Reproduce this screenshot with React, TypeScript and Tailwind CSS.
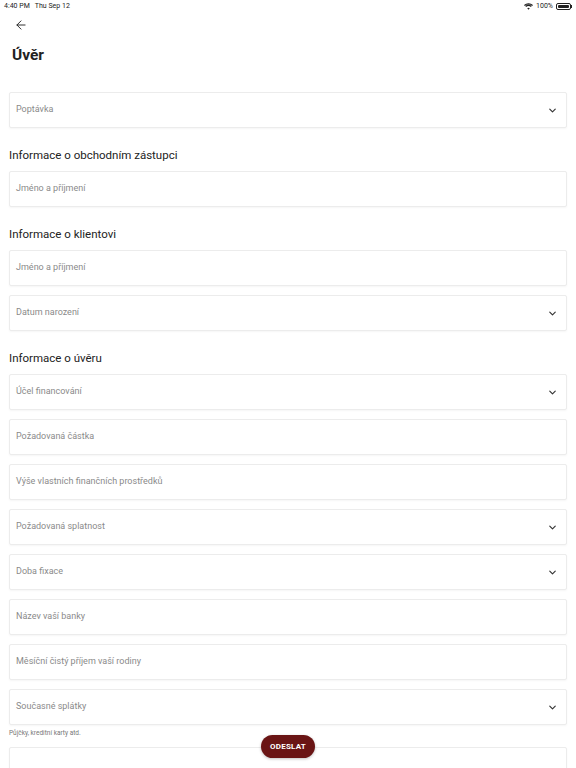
import { ChevronDown, ArrowLeft } from "lucide-react";

type Field = { label: string; select?: boolean };

function Input({ label, select }: Field) {
  return (
    <div className="h-[36px] flex items-center justify-between px-[6px] bg-white border border-[#ececec] rounded-[2px] shadow-[0_1px_2px_rgba(0,0,0,0.04)]">
      <span className="text-[9px] text-[#8a8a8a]">{label}</span>
      {select && <ChevronDown className="w-[11px] h-[11px] text-[#333] mr-[2px]" strokeWidth={2.5} />}
    </div>
  );
}

function Heading({ children }: { children: string }) {
  return <h2 className="text-[11.5px] text-[#222] mt-[20px] mb-[9px] leading-[14px]">{children}</h2>;
}

const loanFields: Field[] = [
  { label: "Účel financování", select: true },
  { label: "Požadovaná částka" },
  { label: "Výše vlastních finančních prostředků" },
  { label: "Požadovaná splatnost", select: true },
  { label: "Doba fixace", select: true },
  { label: "Název vaší banky" },
  { label: "Měsíční čistý příjem vaší rodiny" },
  { label: "Současné splátky", select: true },
];

export default function App() {
  return (
    <main className="relative h-[768px] overflow-hidden bg-white font-['Roboto',sans-serif]">
      {/* status bar */}
      <div className="flex items-center justify-between h-[11px] px-[4px] pt-[1px] text-[7px] text-[#222]">
        <span>4:40 PM&nbsp;&nbsp; Thu Sep 12</span>
        <div className="flex items-center gap-[3px]">
          <svg width="9" height="7" viewBox="0 0 18 13" fill="#222">
            <path d="M9 13l2.6-3.1a4 4 0 0 0-5.2 0z M9 5.6a7.6 7.6 0 0 1 4.8 1.7l1.6-1.9A10 10 0 0 0 9 3.2 10 10 0 0 0 2.6 5.4l1.6 1.9A7.6 7.6 0 0 1 9 5.6z M9 0a13.4 13.4 0 0 0-9 3.4l1.6 1.9A11 11 0 0 1 9 2.4a11 11 0 0 1 7.4 2.9L18 3.4A13.4 13.4 0 0 0 9 0z" />
          </svg>
          <span>100%</span>
          <div className="flex items-center">
            <div className="w-[15px] h-[7px] rounded-[2px] border border-[#222] p-[1px]">
              <div className="w-full h-full bg-[#222] rounded-[1px]" />
            </div>
            <div className="w-[1px] h-[3px] bg-[#222]" />
          </div>
        </div>
      </div>

      <div className="px-[9px]">
        <div className="pt-[7px] pl-[5px] h-[26px]">
          <ArrowLeft className="w-[14px] h-[14px] text-[#222]" strokeWidth={1.6} />
        </div>
        <h1 className="pl-[3px] mt-[6px] text-[15.5px] font-bold text-[#222] leading-[24px]">Úvěr</h1>

        <div className="mt-[25px]">
          <Input label="Poptávka" select />
        </div>

        <Heading>Informace o obchodním zástupci</Heading>
        <Input label="Jméno a příjmení" />

        <Heading>Informace o klientovi</Heading>
        <div className="flex flex-col gap-[9px]">
          <Input label="Jméno a příjmení" />
          <Input label="Datum narození" select />
        </div>

        <Heading>Informace o úvěru</Heading>
        <div className="flex flex-col gap-[9px]">
          {loanFields.map((f) => (
            <Input key={f.label} {...f} />
          ))}
        </div>
        <p className="mt-[4px] text-[6.5px] text-[#777]">Půjčky, kreditní karty atd.</p>
        <div className="mt-[8px]">
          <Input label="" />
        </div>
      </div>

      <button className="absolute left-[261px] top-[735px] w-[54px] h-[23px] rounded-full bg-[#6a1515] text-white text-[8px] font-bold tracking-[0.2px] shadow-[0_1px_3px_rgba(0,0,0,0.25)]">
        ODESLAT
      </button>
    </main>
  );
}
